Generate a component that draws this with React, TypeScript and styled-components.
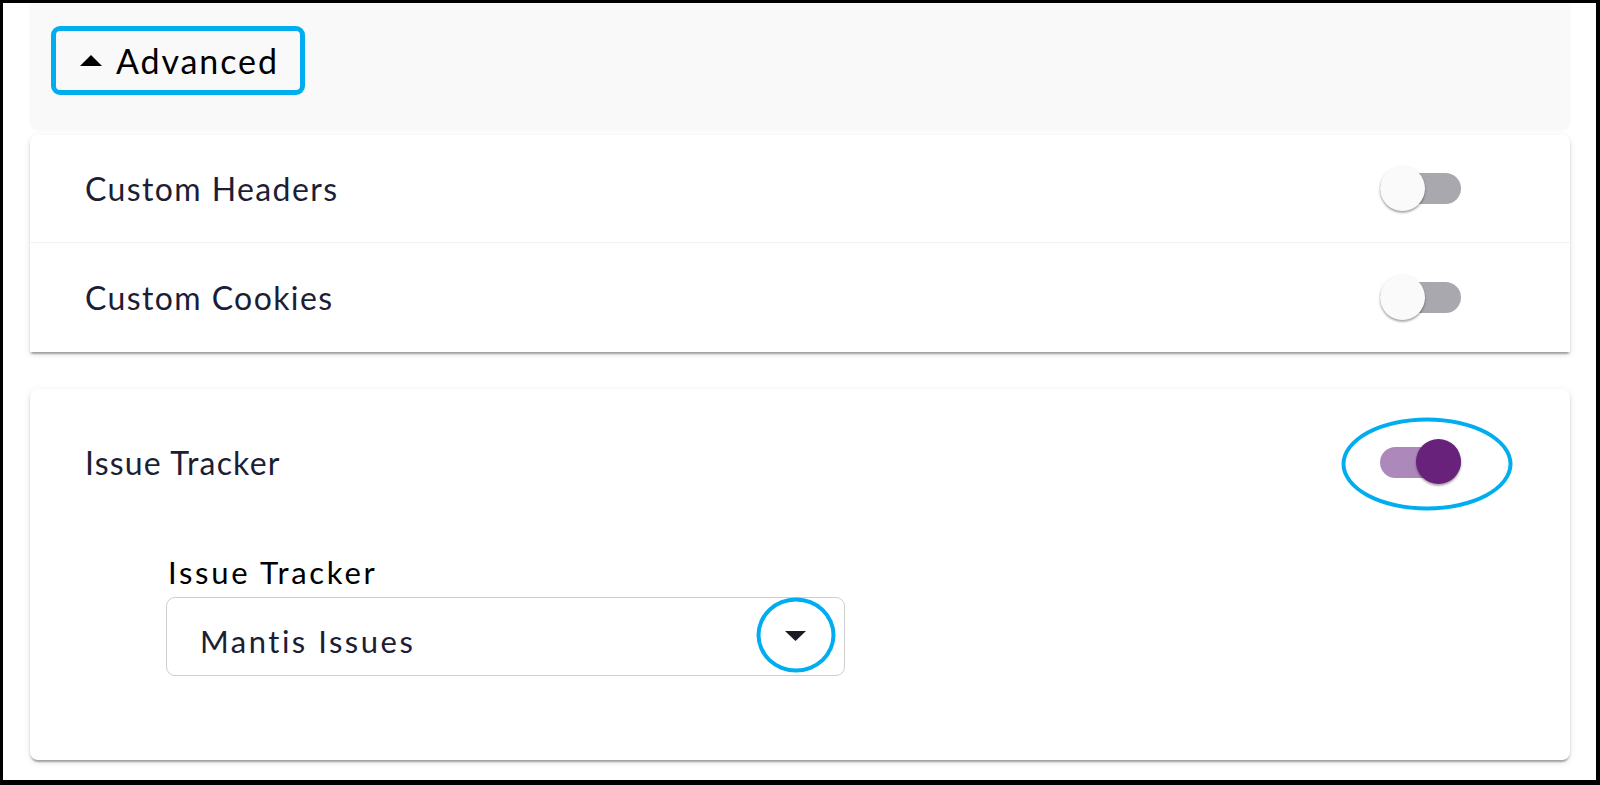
import React from "react";
import styled, { createGlobalStyle } from "styled-components";

const GlobalStyle = createGlobalStyle`
  html, body { margin: 0; padding: 0; background: #fff; }
  body { font-family: Lato, "Open Sans", sans-serif; -webkit-font-smoothing: antialiased; }
  * { box-sizing: border-box; }
`;

const Frame = styled.div`
  width: 1600px;
  height: 785px;
  border-style: solid;
  border-color: #000;
  border-width: 3px 4px 5px 3px;
  background: #fff;
  padding: 0 26px 0 27px;
  display: flex;
  flex-direction: column;
  overflow: hidden;
`;

const AdvancedPanel = styled.div`
  height: 127px;
  flex-shrink: 0;
  background: #f9f9f9;
  border-radius: 0 0 10px 10px;
  padding: 23px 0 0 21px;
  box-shadow: 0 1px 3px rgba(0, 0, 0, 0.04);
`;

const AdvancedButton = styled.button`
  width: 254px;
  height: 69px;
  border: 5px solid #00aeef;
  border-radius: 9px;
  background: transparent;
  display: flex;
  align-items: center;
  gap: 14px;
  padding: 0 0 0 24px;
  font-family: Lato, "Open Sans", sans-serif;
  font-size: 34px;
  letter-spacing: 1.9px;
  color: #000;
  cursor: pointer;
`;

const Card = styled.div<{ $flat?: boolean }>`
  position: relative;
  background: #fff;
  border-radius: ${(p) => (p.$flat ? "8px 8px 0 0" : "8px")};
  box-shadow: 0 4px 2px -2px rgba(0, 0, 0, 0.2), 0 2px 2px 0 rgba(0, 0, 0, 0.14),
    0 2px 6px 0 rgba(0, 0, 0, 0.12);
  flex-shrink: 0;
`;

const CardOne = styled(Card)`
  margin-top: 5px;
`;

const CardTwo = styled(Card)`
  margin-top: 37px;
  height: 371px;
  padding-top: 19px;
`;

const Row = styled.div<{ $divider?: boolean; $h?: number }>`
  height: ${(p) => p.$h ?? 108}px;
  display: flex;
  align-items: center;
  justify-content: space-between;
  padding: 0 109px 0 55px;
  border-bottom: ${(p) => (p.$divider ? "1px solid #f2f2f2" : "none")};
`;

const RowTitle = styled.span<{ $spacing?: number }>`
  font-size: 32px;
  color: #1b1e35;
  letter-spacing: ${(p) => p.$spacing ?? 1.2}px;
`;

const SwitchWrap = styled.div`
  position: relative;
  width: 81px;
  height: 46px;
  display: flex;
  align-items: center;
`;

const Track = styled.div<{ $on?: boolean }>`
  width: 81px;
  height: 31px;
  border-radius: 16px;
  background: ${(p) => (p.$on ? "#ad89bb" : "#a9a8ae")};
`;

const Thumb = styled.div<{ $on?: boolean }>`
  position: absolute;
  top: 0;
  left: ${(p) => (p.$on ? "36px" : "0")};
  width: 45px;
  height: 45px;
  border-radius: 50%;
  background: ${(p) => (p.$on ? "#68227b" : "#fafafa")};
  box-shadow: 0 2px 2px rgba(0, 0, 0, 0.25), 0 1px 3px rgba(0, 0, 0, 0.15);
`;

const Highlight = styled.div<{ $w: number; $h: number; $dx: number; $dy: number }>`
  position: absolute;
  width: ${(p) => p.$w}px;
  height: ${(p) => p.$h}px;
  left: calc(50% + ${(p) => p.$dx}px);
  top: calc(50% + ${(p) => p.$dy}px);
  transform: translate(-50%, -50%);
  border: 4px solid #00aeef;
  border-radius: 50%;
  pointer-events: none;
`;

const Field = styled.div`
  padding: 38px 0 0 136px;
  display: flex;
  flex-direction: column;
  gap: 7px;
`;

const FieldLabel = styled.label`
  font-size: 31px;
  line-height: 36px;
  color: #000;
  letter-spacing: 2.7px;
  padding-left: 2px;
`;

const Select = styled.div`
  width: 679px;
  height: 79px;
  border: 1.5px solid #cfcfcf;
  border-radius: 9px;
  display: flex;
  align-items: center;
  justify-content: space-between;
  padding: 8px 38px 0 33px;
`;

const SelectValue = styled.span`
  font-size: 31px;
  color: #1b1e35;
  letter-spacing: 2.5px;
`;

const Caret = styled.div`
  position: relative;
  width: 21px;
  height: 10px;
  display: flex;
  margin-top: -9px;
`;

function Switch({ on }: { on?: boolean }) {
  return (
    <SwitchWrap>
      <Track $on={on} />
      <Thumb $on={on} />
      {on && <Highlight $w={171} $h={93} $dx={6} $dy={2} />}
    </SwitchWrap>
  );
}

export default function App() {
  return (
    <>
      <GlobalStyle />
      <Frame>
        <AdvancedPanel>
          <AdvancedButton type="button">
            <svg width="22" height="11" viewBox="0 0 22 11">
              <path d="M0 11 L11 0 L22 11 Z" fill="#000" />
            </svg>
            <span>Advanced</span>
          </AdvancedButton>
        </AdvancedPanel>
        <CardOne $flat>
          <Row $divider>
            <RowTitle $spacing={1.4}>Custom Headers</RowTitle>
            <Switch />
          </Row>
          <Row $h={109}>
            <RowTitle $spacing={1.4}>Custom Cookies</RowTitle>
            <Switch />
          </Row>
        </CardOne>
        <CardTwo>
          <Row>
            <RowTitle>Issue Tracker</RowTitle>
            <Switch on />
          </Row>
          <Field>
            <FieldLabel>Issue Tracker</FieldLabel>
            <Select>
              <SelectValue>Mantis Issues</SelectValue>
              <Caret>
                <svg width="21" height="10" viewBox="0 0 21 10">
                  <path d="M0 0 L21 0 L10.5 10 Z" fill="#1b1b26" />
                </svg>
                <Highlight $w={79} $h={75} $dx={0} $dy={-1} />
              </Caret>
            </Select>
          </Field>
        </CardTwo>
      </Frame>
    </>
  );
}
